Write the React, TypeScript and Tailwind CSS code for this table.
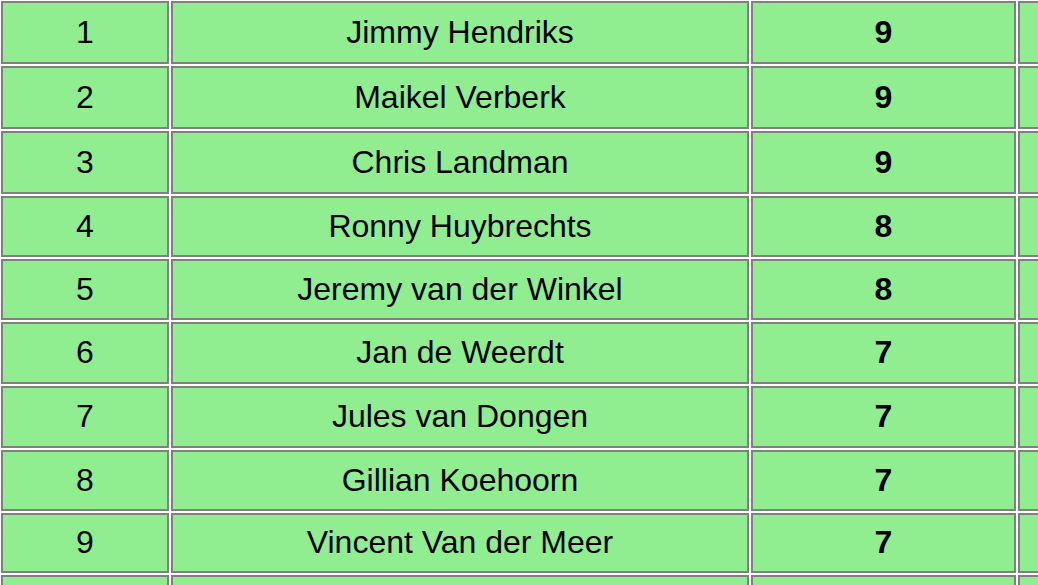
import React from 'react';

const rows: [number, string, number][] = [
  [1, 'Jimmy Hendriks', 9],
  [2, 'Maikel Verberk', 9],
  [3, 'Chris Landman', 9],
  [4, 'Ronny Huybrechts', 8],
  [5, 'Jeremy van der Winkel', 8],
  [6, 'Jan de Weerdt', 7],
  [7, 'Jules van Dongen', 7],
  [8, 'Gillian Koehoorn', 7],
  [9, 'Vincent Van der Meer', 7],
  [10, '', 6],
];

const cell =
  'border-2 border-[#808080] bg-[#90ee90] flex items-center justify-center pb-[2px] text-black';

export default function App() {
  return (
    <div className="w-[1038px] h-[585px] overflow-hidden bg-white font-['Liberation_Sans',Arial,sans-serif] text-[32px]">
      <div className="grid grid-cols-[168px_578px_265px_300px] grid-rows-[63px_63px_63px_61px_61px_62px_62px_61px_60px_62px] gap-[2px] pl-px pt-px">
        {rows.map(([pos, name, pts]) => (
          <React.Fragment key={pos}>
            <div className={cell}>{pos < 10 ? pos : ''}</div>
            <div className={cell}>{name}</div>
            <div className={`${cell} font-bold`}>{pos < 10 ? pts : ''}</div>
            <div className={cell}></div>
          </React.Fragment>
        ))}
      </div>
    </div>
  );
}
